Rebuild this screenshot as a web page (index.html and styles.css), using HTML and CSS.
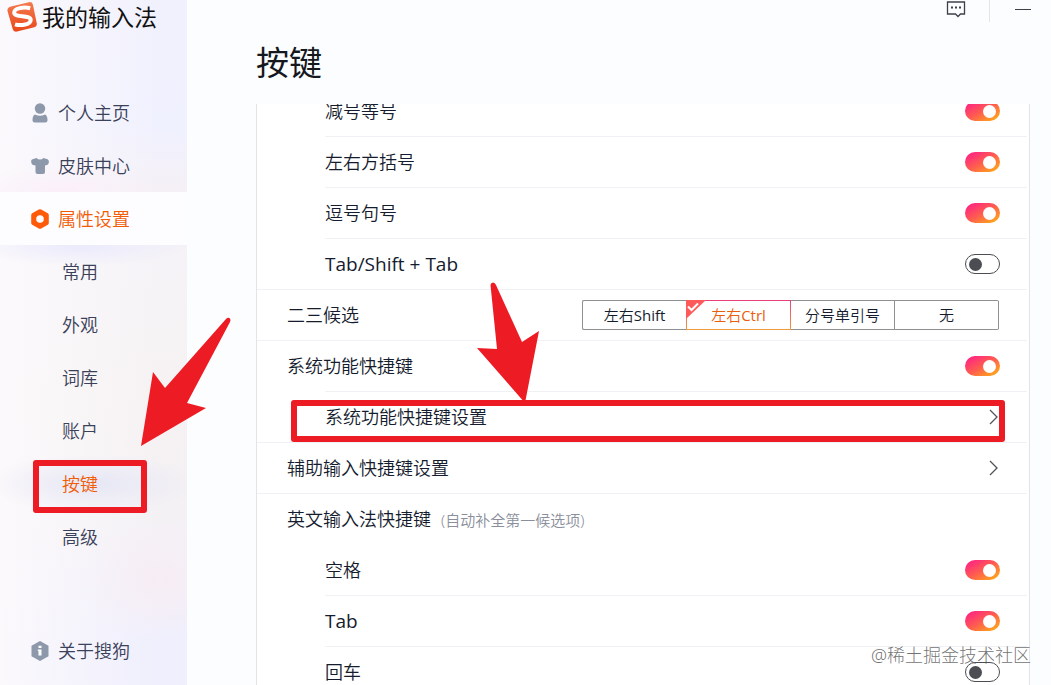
FILE: index.html
```html
<!DOCTYPE html>
<html lang="zh-CN">
<head>
<meta charset="utf-8">
<meta name="viewport" content="width=device-width, initial-scale=1">
<title>按键 - 我的输入法</title>
<link rel="stylesheet" href="styles.css">
</head>
<body>
<div class="app">
  <aside class="sidebar">
    <div class="brand">
      <svg class="brand-logo" width="30" height="31" viewBox="0 0 30 31" aria-hidden="true">
        <defs><linearGradient id="logo" x1="0" y1="0" x2="0" y2="1"><stop offset="0" stop-color="#f47a4e"/><stop offset="1" stop-color="#e8481b"/></linearGradient></defs>
        <path d="M4 5.500 22 1.200Q25 .600 25.900 3.500L29.800 22.500Q30.200 25.500 27.300 26.300L10 30.600Q6.500 31.200 5.700 28L.500 10Q0 6.500 4 5.500Z" fill="url(#logo)"/>
        <path d="M23.200 7.200C17 5.700 7 7 7.200 11.800 7.600 16.800 23.500 13.500 23.700 18.800 23.800 23.500 14 25.200 8 23.300" fill="none" stroke="#fff" stroke-width="4"/>
      </svg>
      <span>我的输入法</span>
    </div>
    <nav class="nav" aria-label="主导航">
      <a class="nav-item" href="#home">
        <svg class="nav-icon" width="18" height="20" viewBox="0 0 18 20" aria-hidden="true"><circle cx="9" cy="5.500" r="5.200"/><path d="M4 11.500Q9 14 14 11.500 16.500 12.500 16.500 17 16.500 19.500 14 19.500H4Q1.500 19.500 1.500 17 1.500 12.500 4 11.500Z"/></svg>
        个人主页</a>
      <a class="nav-item" href="#skin">
        <svg class="nav-icon" width="18" height="20" viewBox="0 0 18 20" aria-hidden="true"><path d="M5.500 2Q9 5 12.500 2L16.500 3.200Q18.200 4 17.800 6.500 17.500 8.500 16 9L14 9.500V16Q14 18 12 18H6.500Q4.500 18 4.500 16V9.500L2 9Q.300 8 .100 5.500 0 3.800 1.500 3.200Z"/></svg>
        皮肤中心</a>
      <a class="nav-item nav-item-active" href="#settings">
        <svg class="nav-icon" width="18" height="20" viewBox="0 0 18 20" aria-hidden="true"><path fill-rule="evenodd" d="M7.800.500Q9 0 10.200.500L16.800 4.200Q17.800 4.800 17.800 6V14Q17.800 15.200 16.800 15.800L10.200 19.500Q9 20 7.800 19.500L1.200 15.800Q.200 15.200.200 14V6Q.200 4.800 1.200 4.200ZM9 6.200A3.800 3.800 0 1 0 9 13.800 3.800 3.800 0 1 0 9 6.200Z"/></svg>
        属性设置</a>
      <a class="sub-item" href="#common">常用</a>
      <a class="sub-item" href="#look">外观</a>
      <a class="sub-item" href="#dict">词库</a>
      <a class="sub-item" href="#account">账户</a>
      <a class="sub-item sub-item-active" href="#keys" aria-current="page">按键</a>
      <a class="sub-item" href="#advanced">高级</a>
    </nav>
    <a class="nav-item nav-about" href="#about">
      <svg class="nav-icon" width="18" height="20" viewBox="0 0 18 20" aria-hidden="true"><path d="M9 0 17.500 4.800V15.200L9 20 .500 15.200V4.800Z"/><path d="M7.500 4.800h3v2.200h-3zM6.800 8.500h3.700v6H7.500v-4.500h-.700z" fill="#fff"/></svg>
      关于搜狗</a>
  </aside>

  <main class="main">
    <div class="window-bar">
      <button class="bar-button" aria-label="反馈"><svg width="20" height="20" viewBox="0 0 20 20" aria-hidden="true"><path d="M1.500 2H18.500V14H14.500L12 16.500 9.500 14H1.500Z" fill="none" stroke="#3c4048" stroke-width="1.300"/><path d="M5 6.500h2v2H5zM9 6.500h2v2H9zM13 6.500h2v2h-2z" fill="#3c4048"/></svg></button>
      <span class="bar-divider"></span>
      <button class="bar-button" aria-label="最小化"><svg width="20" height="20" viewBox="0 0 20 20" aria-hidden="true"><path d="M2 9.500H18" stroke="#3c4048"/></svg></button>
    </div>
    <h1 class="title">按键</h1>
    <section class="panel">
      <div class="rows">
        <div class="row row-indent"><label for="k1">减号等号</label><input class="toggle" type="checkbox" id="k1" checked></div>
        <div class="row row-indent"><label for="k2">左右方括号</label><input class="toggle" type="checkbox" id="k2" checked></div>
        <div class="row row-indent"><label for="k3">逗号句号</label><input class="toggle" type="checkbox" id="k3" checked></div>
        <div class="row row-indent"><label class="latin key-name" for="k4">Tab/Shift + Tab</label><input class="toggle" type="checkbox" id="k4"></div>
        <div class="row">
          <span id="pick">二三候选</span>
          <div class="segments" role="radiogroup" aria-labelledby="pick">
            <label class="segment"><input type="radio" name="pick">左右<span class="latin">Shift</span></label>
            <label class="segment segment-active"><input type="radio" name="pick" checked>左右<span class="latin">Ctrl</span>
              <svg class="segment-check" width="20" height="20" viewBox="0 0 20 20" aria-hidden="true"><path d="M0 0H20L0 19Z" fill="#ff5a5a"/><path d="M2 6.500 5.500 10 12 3.500" fill="none" stroke="#fff" stroke-width="2"/></svg>
            </label>
            <label class="segment"><input type="radio" name="pick">分号单引号</label>
            <label class="segment"><input type="radio" name="pick">无</label>
          </div>
        </div>
        <div class="row"><label for="k5">系统功能快捷键</label><input class="toggle" type="checkbox" id="k5" checked></div>
        <button class="row row-indent row-marked">系统功能快捷键设置<svg class="chevron" width="12" height="16" viewBox="0 0 12 16" aria-hidden="true"><path d="M2 1 9 8 2 15"/></svg></button>
        <button class="row">辅助输入快捷键设置<svg class="chevron" width="12" height="16" viewBox="0 0 12 16" aria-hidden="true"><path d="M2 1 9 8 2 15"/></svg></button>
        <div class="row"><span>英文输入法快捷键<small class="note">(自动补全第一候选项)</small></span></div>
        <div class="row row-indent row-plain"><label for="k6">空格</label><input class="toggle" type="checkbox" id="k6" checked></div>
        <div class="row row-indent"><label class="latin key-name" for="k7">Tab</label><input class="toggle" type="checkbox" id="k7" checked></div>
        <div class="row row-indent"><label for="k8">回车</label><input class="toggle" type="checkbox" id="k8"></div>
      </div>
    </section>
  </main>

  <svg class="arrows" width="560" height="460" viewBox="0 0 560 460" aria-hidden="true">
    <path d="M141 446 153 372 165 388 226 319Q228 317 230 318.500 231 320 230 322L187 403 206 408Z"/>
    <path d="M525 403 477 348 497 349 490.500 285Q491 282.500 493 282.500 495 282.500 496 285L522 342 539 331Z"/>
  </svg>
  <span class="watermark">@稀土掘金技术社区</span>
</div>
</body>
</html>
```
FILE: styles.css
```css
* {
  box-sizing: border-box;
}

body {
  margin: 0;
  font-family: "Noto Sans", "Noto Sans CJK SC", sans-serif;
  font-size: 18px;
  font-weight: 350;
  line-height: 24px;
  color: #151c2e;
}

button {
  font: inherit;
  color: inherit;
  background: none;
  border: 0;
  padding: 0;
}

.app {
  position: relative;
  display: flex;
  height: 100vh;
  overflow: hidden;
  background: #fcfdff;
}

.sidebar {
  display: flex;
  flex-direction: column;
  flex: 0 0 187px;
  padding-bottom: 8px;
  background:
    radial-gradient(ellipse 90px 26px at 60px 192px, #fbeffa, transparent),
    radial-gradient(ellipse 110px 20px at 80px 246px, #ebeafc, transparent),
    radial-gradient(ellipse 80px 60px at 160px 580px, #f7edf4, transparent),
    linear-gradient(90deg, rgba(252, 250, 252, 0.9), transparent 85%),
    linear-gradient(180deg, #f1f1fd 0, #f0f1fe 130px, #f5f0f6 190px, #f5f3f7 260px, #f6f2f2 400px, #f4f1f5 520px, #efeffd 640px);
}

.brand {
  display: flex;
  align-items: center;
  gap: 5px;
  height: 33px;
  padding-left: 7px;
  margin-bottom: 53px;
  font-size: 23px;
  font-weight: 400;
  color: #111;
}

.nav {
  display: flex;
  flex-direction: column;
}

.nav-item,
.sub-item {
  display: flex;
  align-items: center;
  height: 53px;
  color: #3a4159;
  text-decoration: none;
}

.nav-item {
  gap: 9px;
  padding-left: 31px;
}

.nav-icon {
  fill: #8d98ab;
}

.nav-item-active {
  background: #fdfdff;
  color: #f25c05;
}

.nav-item-active .nav-icon {
  fill: #fd5a0a;
}

.sub-item {
  position: relative;
  padding-left: 62px;
}

.sub-item-active {
  color: #f25c05;
  background: radial-gradient(ellipse at center, #e6e7f5, transparent 80%);
}

.sub-item-active::after,
.row-marked::after {
  content: "";
  position: absolute;
  border: 6px solid #ed1c24;
  border-radius: 3px;
}

.sub-item-active::after {
  inset: 3px 40px -3px 33px;
}

.nav-about {
  margin-top: auto;
}

.main {
  display: flex;
  flex-direction: column;
  flex: 1;
  min-width: 0;
  padding: 0 21px 0 69px;
}

.window-bar {
  display: flex;
  justify-content: flex-end;
  height: 22px;
}

.bar-button {
  display: flex;
  width: 20px;
  height: 20px;
}

.bar-divider {
  width: 1px;
  margin: 0 23px;
  background: #e3e5ec;
}

.bar-divider + .bar-button {
  margin-right: -3px;
}

.title {
  margin: 17px 0;
  font-size: 33px;
  font-weight: 400;
  line-height: 48px;
  color: #15181d;
}

.panel {
  flex: 1;
  min-height: 0;
  overflow: hidden;
  background: #fff;
  border: solid #e2e4ea;
  border-width: 0 1px;
}

/* The list is scrolled part of the way through its first row. */
.rows {
  display: flex;
  flex-direction: column;
  margin-top: -19px;
}

.row {
  position: relative;
  display: flex;
  flex: none;
  align-items: center;
  justify-content: space-between;
  height: 51px;
  padding: 0 27px 0 30px;
  margin-right: 2px;
  border-top: 1px solid #f0f1f4;
  text-align: left;
}

.row-indent {
  padding-left: 0;
  margin-left: 68px;
}

.row-plain {
  border-top-color: transparent;
}

.row-marked::after {
  inset: 8px 22px 0 -34px;
}

.latin {
  font-family: "Open Sans", sans-serif;
  font-weight: 400;
}

.key-name {
  font-size: 19px;
}

.toggle {
  appearance: none;
  display: flex;
  align-items: center;
  width: 35px;
  height: 20px;
  padding: 0 3px;
  margin: 0;
  border: 1px solid #4b4d52;
  border-radius: 10px;
  background: #fff;
}

.toggle::before {
  content: "";
  width: 13px;
  height: 13px;
  border-radius: 50%;
  background: #4b4d52;
}

.toggle:checked {
  justify-content: flex-end;
  padding: 0 4px;
  border: 0;
  background: linear-gradient(150deg, #ff2c7c 15%, #ff5c50 50%, #ffa51c 90%);
}

.toggle:checked::before {
  background: #fff;
}

.segments {
  display: grid;
  grid-template-columns: repeat(4, 104px);
  height: 30px;
  margin-right: 1px;
  border: 1px solid #8e9092;
  border-right: 0;
  border-radius: 2px;
  font-size: 15px;
}

.segment {
  position: relative;
  display: flex;
  align-items: center;
  justify-content: center;
  border-right: 1px solid #8e9092;
}

.segment input {
  position: absolute;
  opacity: 0;
}

.segment-active {
  margin: -1px 0 -1px -1px;
  color: #e8600c;
  border: 1px solid;
  border-image: linear-gradient(#e8407c, #f59a3c) 1;
}

.segment-check {
  position: absolute;
  top: -1px;
  left: -1px;
}

.chevron {
  fill: none;
  stroke: #50545c;
  stroke-width: 1.3;
}

.note {
  margin-left: 10px;
  font-size: 15px;
  color: #8a8f9b;
}

.arrows {
  position: absolute;
  top: 0;
  left: 0;
  fill: #ed1c24;
  pointer-events: none;
}

.watermark {
  position: absolute;
  right: 20px;
  bottom: 18px;
  font-weight: 300;
  color: rgba(90, 90, 90, 0.85);
}
```
